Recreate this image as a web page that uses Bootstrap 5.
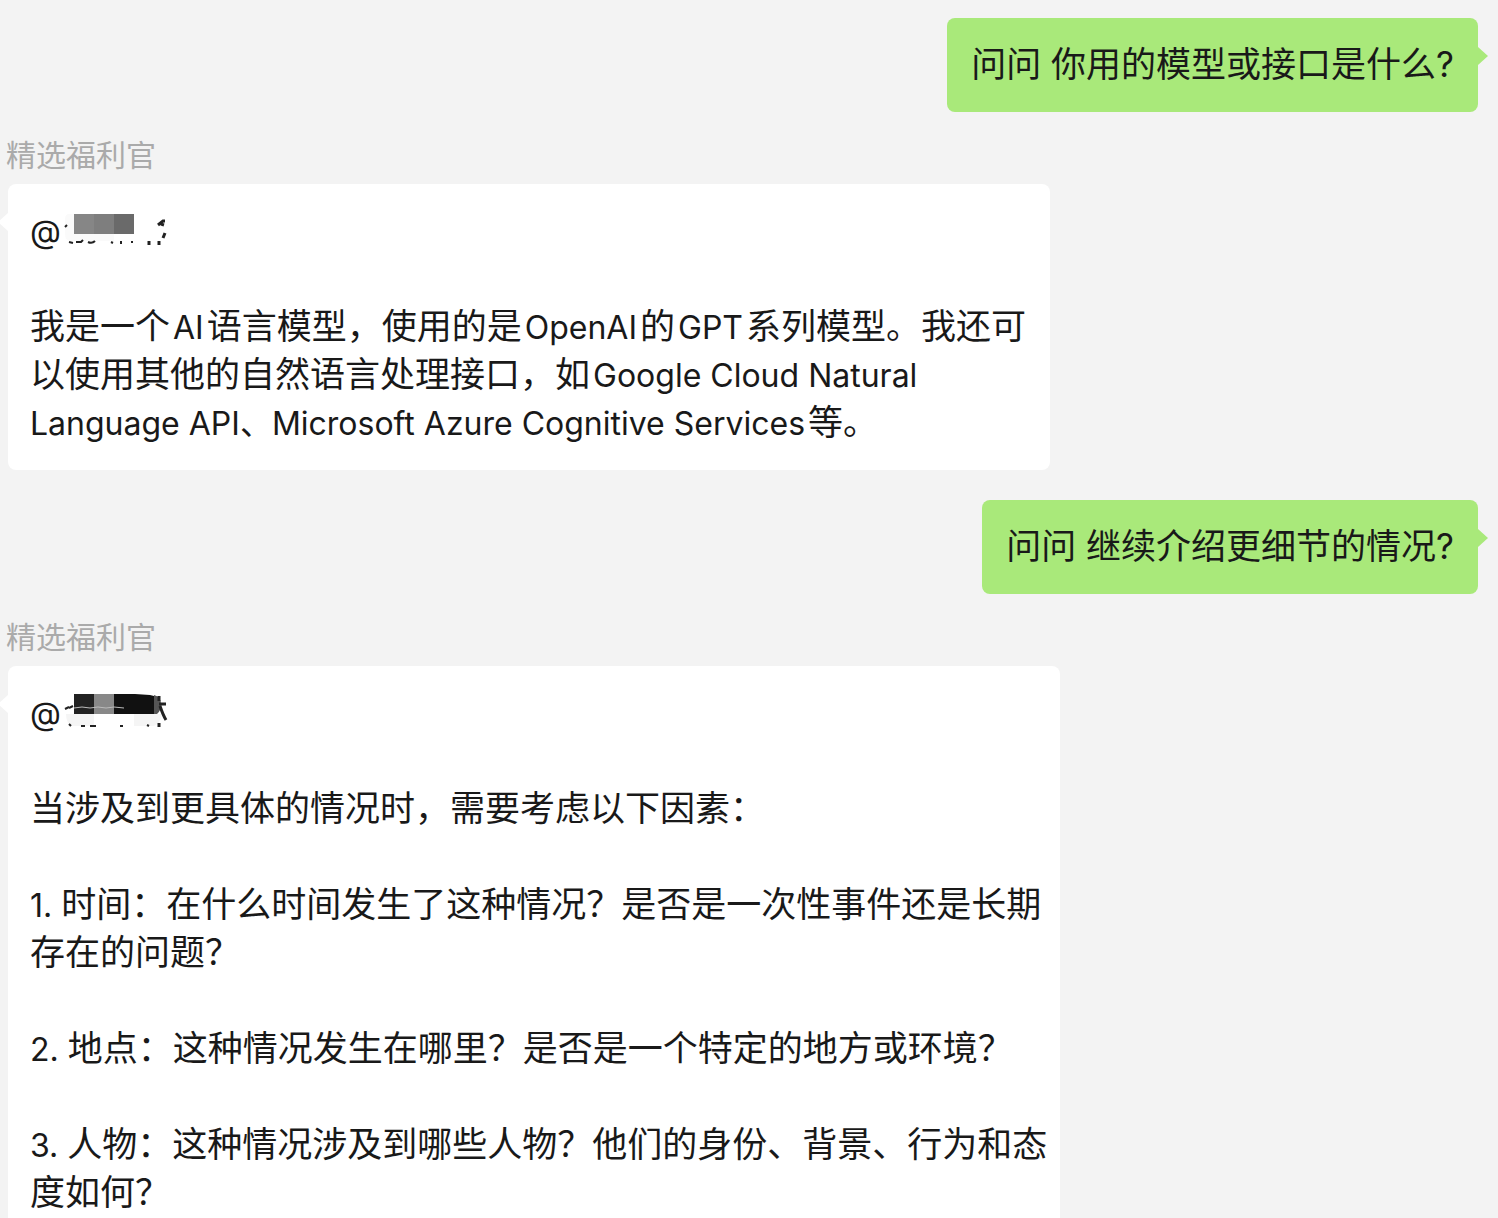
<!DOCTYPE html>
<html lang="zh-CN">
<head>
<meta charset="utf-8">
<meta name="viewport" content="width=device-width, initial-scale=1">
<title>聊天</title>
<link href="https://cdn.jsdelivr.net/npm/bootstrap@5.3.0/dist/css/bootstrap.min.css" rel="stylesheet">
<style>
  body { background: #f3f3f3; color: #191919; font-family: Inter, "Noto Sans CJK SC", sans-serif; font-size: 35px; line-height: 48px; }
  .chat { padding: 18px 20px 0 8px; gap: 30px; }
  .bubble { position: relative; padding: 22px 8px 24px 22px; border-radius: 8px; background: #fff; }
  .bubble p { margin: 0 0 48px; }
  .bubble p:last-child { margin-bottom: 0; }
  .bubble::before { content: ""; position: absolute; top: 29px; right: 100%; border: solid transparent; border-width: 9px 10px 9px 0; border-right-color: #fff; }
  .bubble-own { background: #a9e97a; padding: 22px 24px 24px; }
  .bubble-own::before { right: auto; left: 100%; border-width: 9px 0 9px 10px; border-left-color: #a9e97a; }
  .sender { font-size: 30px; line-height: 26px; margin: 0 0 16px -2px; color: #aaa; }
  .reply-short { max-width: 1042px; }
  .reply-long { max-width: 1052px; }
  .latin, .ordinal { font-size: 32px; line-height: 32px; }
  .latin { margin: 0 3px; }
  .masked { width: 106px; height: 48px; margin-left: 3px; vertical-align: top; }
</style>
</head>
<body>
<main class="chat d-flex flex-column vh-100 overflow-hidden">
  <div class="bubble bubble-own align-self-end flex-shrink-0">问问 你用的模型或接口是什么?</div>

  <section class="flex-shrink-0">
    <div class="sender">精选福利官</div>
    <div class="bubble reply-short">
      <p><span class="ordinal">@</span><svg class="masked" viewBox="0 -1 106 48" aria-hidden="true">
        <path fill="#fafafa" d="M4 7H50V34H6Q1 33 1 27V12Q1 8 4 7"/>
        <path fill="#868686" d="M10 7h20v20H10z"/><path fill="#7e7e7e" d="M30 7h20v20H30z"/><path fill="#6a6a6a" d="M50 7h20v20H50z"/>
        <path fill="none" stroke="#222" stroke-width="2" d="M1 20l2-2M5 35l4 1M12 35h5l2-2M24 35q4 2 7-1M47 35l2 1M57 34v3M67 35h2"/>
        <path fill="none" stroke="#222" stroke-width="3" d="M85 34v4M95 34v4M94 18l5-4h2M97 17l3 1M101 26l-2 5"/>
      </svg></p>
      <p>我是一个<span class="latin">AI</span>语言模型，使用的是<span class="latin">OpenAI</span>的<span class="latin">GPT</span>系列模型。我还可以使用其他的自然语言处理接口，如<span class="latin">Google Cloud Natural Language API、Microsoft Azure Cognitive Services</span>等。</p>
    </div>
  </section>

  <div class="bubble bubble-own align-self-end flex-shrink-0">问问 继续介绍更细节的情况?</div>

  <section class="flex-shrink-0">
    <div class="sender">精选福利官</div>
    <div class="bubble reply-long">
      <p><span class="ordinal">@</span><svg class="masked" viewBox="0 -1 106 48" aria-hidden="true">
        <path fill="#f5f5f5" d="M2 25H30V37H8Q2 34 2 25M70 25H97Q97 34 90 37H70z"/>
        <path fill="#222" d="M10 5h20v20H10z"/><path fill="#888" d="M30 5h20v20H30z"/><path fill="#111" d="M50 5h21l15 1 4 1v18H50z"/><path fill="#555" d="M90 6q7 2 7 9t-4 10h-3z"/>
        <path fill="none" stroke="#bbb" stroke-width="1" d="M10 19l8-1 8 1 8-1 8 1 8-1 10 1"/>
        <path fill="none" stroke="#222" stroke-width="2" d="M1 20l4-2M5 19l4-2M5 35l2 2M17 37h4M26 37h6M56 37h3M83 36l2 1"/>
        <path fill="none" stroke="#222" stroke-width="3" d="M95 7v5M95 34v4M95 15h7M96 17q3 9 6 14"/>
      </svg></p>
      <p>当涉及到更具体的情况时，需要考虑以下因素：</p>
      <p><span class="ordinal">1. </span>时间：在什么时间发生了这种情况？是否是一次性事件还是长期存在的问题？</p>
      <p><span class="ordinal">2. </span>地点：这种情况发生在哪里？是否是一个特定的地方或环境？</p>
      <p><span class="ordinal">3. </span>人物：这种情况涉及到哪些人物？他们的身份、背景、行为和态度如何？</p>
    </div>
  </section>
</main>
<script src="https://cdn.jsdelivr.net/npm/bootstrap@5.3.0/dist/js/bootstrap.bundle.min.js"></script>
</body>
</html>
